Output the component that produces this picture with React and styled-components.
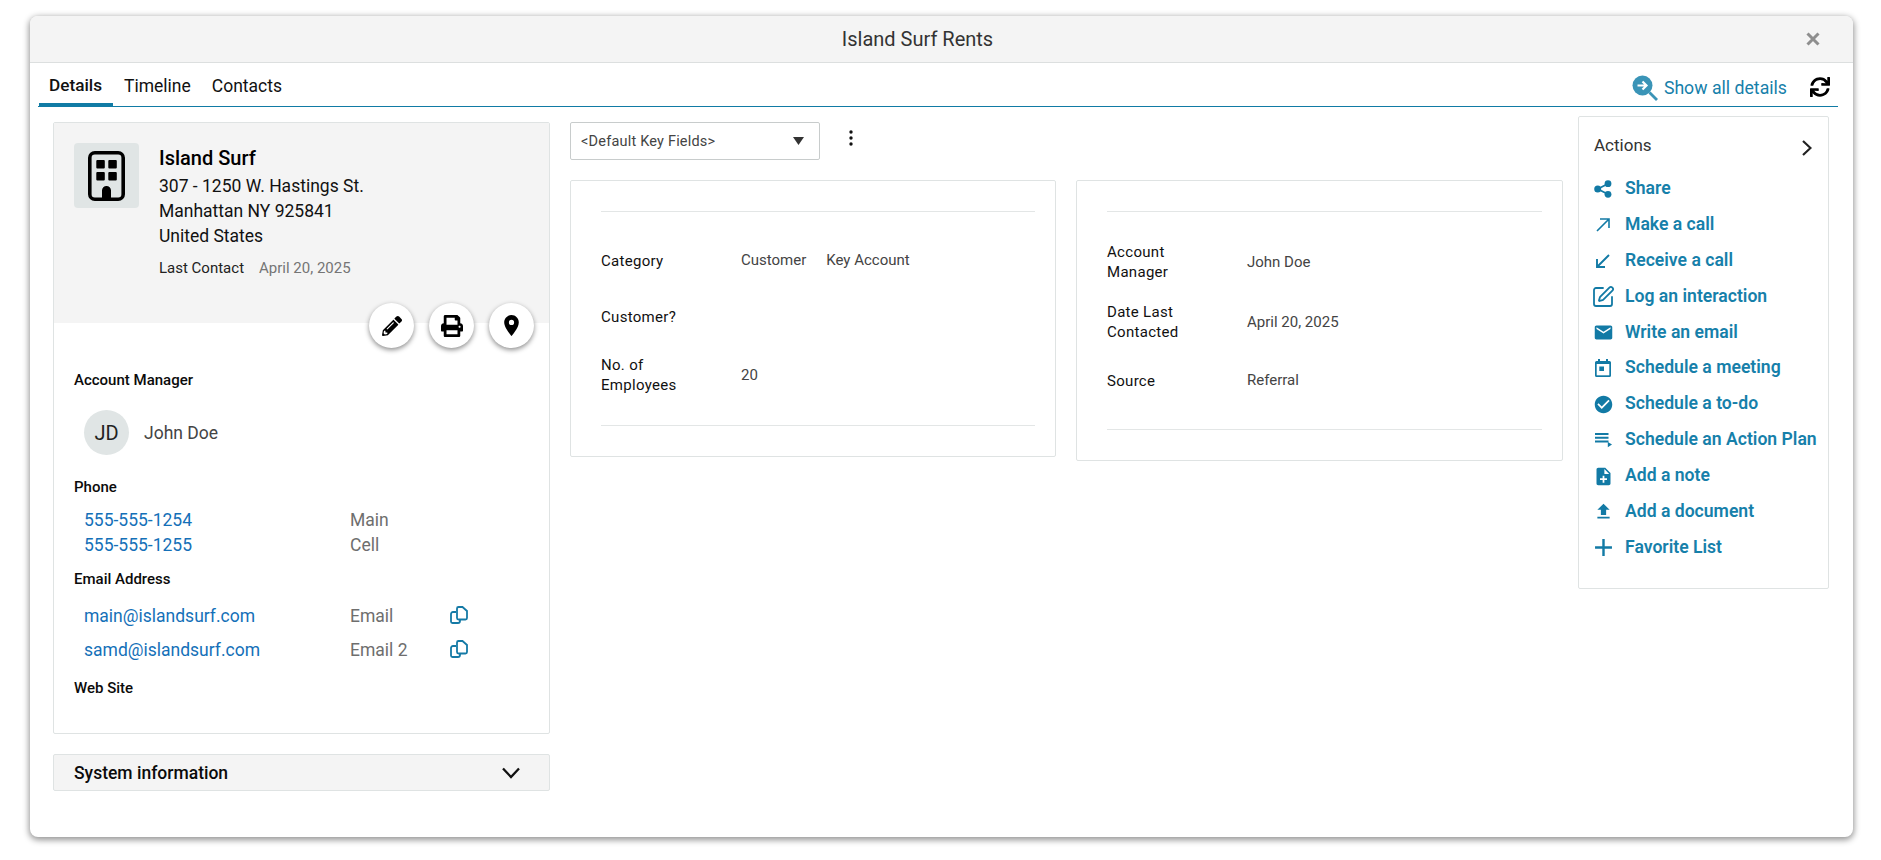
import React from "react";
import styled, { createGlobalStyle } from "styled-components";
import { MdEmail, MdCheckCircle, MdNoteAdd, MdFileUpload, MdAdd, MdLocationOn } from "react-icons/md";
import { FaPencilAlt, FaPrint, FaSync } from "react-icons/fa";
import { SquarePen } from "lucide-react";

const Global = createGlobalStyle`
  html, body { margin: 0; padding: 0; background: #fff; }
  body { font-family: Roboto, "Liberation Sans", sans-serif; color: #111; min-height: 860px; }
  * { box-sizing: border-box; }
`;
const Dialog = styled.div`
  width: 1823px; height: 821px; margin: 16px 0 0 30px;
  background: #fff; border-radius: 8px; overflow: hidden;
  box-shadow: 0 2px 6px 1px rgba(0,0,0,.42);
  display: flex; flex-direction: column;
`;
const Header = styled.div`
  height: 47px; flex: none; background: #f4f4f4; border-bottom: 1px solid #dcdfdf;
  display: flex; align-items: center; justify-content: center; position: relative;
  font-size: 20px; color: #333; padding: 0 48px 0 0;
`;
const Close = styled.svg`
  position: absolute; right: 33px; top: 16px; width: 14px; height: 14px;
`;
const TabBar = styled.div`
  margin: 0 15px 0 8px; height: 44px; flex: none; border-bottom: 1px solid #117ba5;
  display: flex; align-items: flex-end; padding-left: 1px;
`;
const Tab = styled.div`
  height: 43px; padding: 12px 10px 0 11px; font-size: 17.5px; line-height: 22px; color: #111;
`;
const ActiveTab = styled.div`
  height: 44px; width: 74px; padding: 11px 0 0 10px; margin-bottom: -1px; font-size: 17.2px; line-height: 22px;
  font-weight: 500; color: #111; border-bottom: 4px solid #117ba5;
`;
const TabTools = styled.div`
  margin-left: auto; display: flex; align-items: center; height: 43px; padding: 7px 8px 0 0;
  color: #1680aa; font-size: 17.7px; font-weight: 400;
`;
const ShowIcon = styled.svg` width: 26px; height: 26px; margin-right: 6px; margin-left: 1px; `;
const Refresh = styled.span` display: flex; color: #000; font-size: 20px; margin-left: 23px; margin-top: -2px; `;
const Body = styled.div`
  flex: 1; display: flex; padding: 15px 0 0 23px; align-items: flex-start;
`;
const LeftCol = styled.div` width: 497px; flex: none; `;
const Card = styled.div`
  border: 1px solid #dfe3e3; border-radius: 2px; background: #fff; position: relative;
`;
const AccountCard = styled(Card)` height: 612px; `;
const AccountHead = styled.div`
  height: 200px; background: #f4f4f4; padding: 20px; display: flex;
`;
const IconBox = styled.div`
  width: 65px; height: 65px; background: #e0e5e5; border-radius: 4px; display: flex;
  align-items: center; justify-content: center; flex: none; margin-right: 20px;
`;
const AccountInfo = styled.div` padding-top: 3px; `;
const Name = styled.div` font-size: 20px; font-weight: 500; line-height: 25px; color: #000; margin-bottom: 3px; `;
const Addr = styled.div` font-size: 17.5px; line-height: 25px; color: #111; `;
const LastRow = styled.div` font-size: 15px; line-height: 20px; margin-top: 9px; color: #222; display: flex; gap: 15px; `;
const Muted = styled.span` color: #757575; `;
const RoundRow = styled.div`
  position: absolute; top: 180px; right: 15px; display: flex; gap: 15px;
`;
const Round = styled.div`
  width: 45px; height: 45px; border-radius: 50%; background: #fff; display: flex;
  align-items: center; justify-content: center; color: #000; font-size: ${p => p.$s || 20}px;
  box-shadow: 0 2px 5px rgba(0,0,0,.45);
`;
const Contact = styled.div` padding: 47px 20px 0; `;
const Label = styled.div`
  font-size: 15px; font-weight: 500; line-height: 20px; color: #0b0b0b; margin-top: ${p => p.$mt || 0}px;
`;
const Person = styled.div` display: flex; align-items: center; margin: 20px 0 22px 10px; font-size: 17.5px; color: #444; `;
const Avatar = styled.div`
  width: 45px; height: 45px; border-radius: 50%; background: #e0e5e5; color: #222;
  display: flex; align-items: center; justify-content: center; font-size: 20px; margin-right: 15px;
`;
const ContactRow = styled.div`
  display: grid; grid-template-columns: 266px 100px 30px; height: ${p => p.$h}px; padding-left: 10px;
  align-items: center; font-size: 17.5px; margin-top: ${p => p.$mt || 0}px;
`;
const Link = styled.span` color: #1470b8; `;
const Kind = styled.span` color: #6e6e6e; `;
const CopyIcon = styled.svg` width: 18px; height: 18px; margin-top: -3px; `;
const SystemBar = styled.div`
  margin-top: 20px; height: 37px; background: #f4f4f4; border: 1px solid #dfe3e3; border-radius: 2px;
  display: flex; align-items: center; justify-content: space-between; padding: 0 29px 0 20px;
  font-size: 17.5px; font-weight: 500; color: #0b0b0b;
`;
const MidCol = styled.div` width: 993px; flex: none; margin-left: 20px; `;
const SelectRow = styled.div` display: flex; align-items: center; height: 38px; `;
const Select = styled.div`
  width: 250px; height: 38px; border: 1px solid #c8cccc; border-radius: 2px; padding: 0 15px 0 10px;
  display: flex; align-items: center; justify-content: space-between; font-size: 14.5px; color: #444; letter-spacing: .2px;
`;
const Kebab = styled.svg` width: 6px; height: 16px; margin: -6px 0 0 28px; `;
const Panels = styled.div` display: grid; grid-template-columns: 486px 487px; gap: 20px; margin-top: 20px; align-items: start; `;
const Panel = styled(Card)` height: ${p => p.$h}px; padding: 30px 20px 0 30px; `;
const FieldList = styled.div`
  border-top: 1px solid #e3e6e6; border-bottom: 1px solid #e3e6e6; height: ${p => p.$h}px;
  padding-top: ${p => p.$pt}px;
`;
const Field = styled.div`
  display: grid; grid-template-columns: 140px 1fr; align-items: center; height: ${p => p.$h}px;
  font-size: 15px; letter-spacing: .3px; line-height: 20px;
`;
const FLabel = styled.div` color: #111; `;
const FValue = styled.div` color: #444; display: flex; gap: 20px; letter-spacing: 0; margin-top: ${p => p.$up ? -2 : 0}px; `;
const ActionsCol = styled(Card)`
  width: 251px; height: 473px; margin-left: 15px; margin-top: -6px; padding: 17px 0 0 9px;
`;
const ActionsHead = styled.div`
  display: flex; justify-content: space-between; font-size: 17px; line-height: 22px; color: #333;
  padding: 0 16px 0 6px; margin-bottom: 11px; height: 25px; align-items: flex-start;
`;
const ChevronRightIcon = styled.svg` width: 10px; height: 16px; margin-top: 6px; `;
const ActionRow = styled.div`
  height: 35.9px; display: flex; align-items: center; color: #1680aa; font-size: 17.6px; font-weight: 600; white-space: nowrap;
`;
const ActionIcon = styled.span`
  width: 30px; margin-right: 7px; display: flex; justify-content: center; flex: none; margin-top: 2px; color: #127aa5;
  font-size: ${p => p.$s || 21}px;
`;

const ShareGlyph = () => (
  <svg width="18" height="18" viewBox="0 0 18 18" fill="#127aa5">
    <circle cx="3.700" cy="9" r="3.500" /><circle cx="14" cy="3.700" r="3.400" /><circle cx="14" cy="14.300" r="3.400" />
    <path d="M3.700 9 14 3.700M3.700 9 14 14.300" stroke="#127aa5" strokeWidth="1.800" />
  </svg>
);
const ArrowOut = () => (
  <svg width="16" height="16" viewBox="0 0 16 16" fill="none" stroke="#127aa5" strokeWidth="1.600"><path d="M2 14 14 2M5 2h9v9" /></svg>
);
const ArrowIn = () => (
  <svg width="16" height="16" viewBox="0 0 16 16" fill="none" stroke="#127aa5" strokeWidth="1.900"><path d="M14 2 2 14M2 6v8h8" /></svg>
);
const CalendarGlyph = () => (
  <svg width="16" height="18" viewBox="0 0 16 18">
    <path fill="#127aa5" d="M3 0h2v2h6V0h2v2h1.500A1.500 1.500 0 0 1 16 3.500v13a1.500 1.500 0 0 1-1.500 1.500h-13A1.500 1.500 0 0 1 0 16.500v-13A1.500 1.500 0 0 1 1.500 2H3z" />
    <rect x="1.700" y="5" width="12.600" height="11.300" fill="#fff" />
    <rect x="4.300" y="7.500" width="4.700" height="4.500" fill="#127aa5" />
  </svg>
);
const PlanGlyph = () => (
  <svg width="18" height="15" viewBox="0 0 18 15" fill="#127aa5">
    <path d="M1 0h13.500v2H1zM1 3.700h13.500v2H1zM1 7.400h13.500v2H1z" />
    <path d="M13.800 9 18 11.500l-4.200 2.800z" />
  </svg>
);

const actions = [
  ["Share", <ShareGlyph />],
  ["Make a call", <ArrowOut />],
  ["Receive a call", <ArrowIn />],
  ["Log an interaction", <SquarePen size={24} strokeWidth={1.8} />],
  ["Write an email", <MdEmail />, 21],
  ["Schedule a meeting", <CalendarGlyph />],
  ["Schedule a to-do", <MdCheckCircle />, 21],
  ["Schedule an Action Plan", <PlanGlyph />],
  ["Add a note", <MdNoteAdd />, 21],
  ["Add a document", <MdFileUpload />, 21],
  ["Favorite List", <MdAdd />, 29],
];
const Copy = () => (
  <CopyIcon viewBox="0 0 18 18" fill="none" stroke="#157aa6" strokeWidth="1.800">
    <path d="M6 6H3a2 2 0 0 0-2 2v7.500a1.500 1.500 0 0 0 1.500 1.500H8a2 2 0 0 0 2-2v-1" />
    <path d="M7 2.500A1.500 1.500 0 0 1 8.500 1h4L17 5v7a1.500 1.500 0 0 1-1.500 1.500h-7A1.500 1.500 0 0 1 7 12z" />
  </CopyIcon>
);

export default function App() {
  return (
    <>
      <Global />
      <Dialog>
        <Header>
          Island Surf Rents
          <Close viewBox="0 0 14 14" stroke="#8e8e8e" strokeWidth="3" fill="none"><path d="M1.500 1.500l11 11M12.500 1.500l-11 11" /></Close>
        </Header>
        <TabBar>
          <ActiveTab>Details</ActiveTab>
          <Tab>Timeline</Tab>
          <Tab>Contacts</Tab>
          <TabTools>
            <ShowIcon viewBox="0 0 26 26">
              <circle cx="10.500" cy="10.500" r="10" fill="#3a94b7" />
              <path d="M17.500 17.500l7.500 7.500" stroke="#3a94b7" strokeWidth="2.800" />
              <path d="M5.500 10.500h9.500M10.500 6.500l4 4-4 4" stroke="#fff" strokeWidth="2.200" fill="none" />
            </ShowIcon>
            Show all details
            <Refresh><FaSync /></Refresh>
          </TabTools>
        </TabBar>
        <Body>
          <LeftCol>
            <AccountCard>
              <AccountHead>
                <IconBox>
                  <svg width="37" height="50" viewBox="0 0 37 50" fill="none">
                    <rect x="1.800" y="1.800" width="33.400" height="46.400" rx="5" stroke="#000" strokeWidth="3.600" />
                    <path fill="#000" d="M9.300 9h6.500a1 1 0 0 1 1 1v6.500a1 1 0 0 1-1 1H9.300a1 1 0 0 1-1-1V10a1 1 0 0 1 1-1zM21.300 9h6.500a1 1 0 0 1 1 1v6.500a1 1 0 0 1-1 1h-6.500a1 1 0 0 1-1-1V10a1 1 0 0 1 1-1zM9.300 21h6.500a1 1 0 0 1 1 1v6.500a1 1 0 0 1-1 1H9.300a1 1 0 0 1-1-1V22a1 1 0 0 1 1-1zM21.300 21h6.500a1 1 0 0 1 1 1v6.500a1 1 0 0 1-1 1h-6.500a1 1 0 0 1-1-1V22a1 1 0 0 1 1-1zM14 48V39.500a4.500 4.500 0 0 1 9 0V48z" />
                  </svg>
                </IconBox>
                <AccountInfo>
                  <Name>Island Surf</Name>
                  <Addr>307 - 1250 W. Hastings St.</Addr>
                  <Addr>Manhattan NY 925841</Addr>
                  <Addr>United States</Addr>
                  <LastRow>Last Contact <Muted>April 20, 2025</Muted></LastRow>
                </AccountInfo>
              </AccountHead>
              <RoundRow>
                <Round><FaPencilAlt /></Round>
                <Round $s={22}><FaPrint /></Round>
                <Round $s={25}><MdLocationOn /></Round>
              </RoundRow>
              <Contact>
                <Label>Account Manager</Label>
                <Person><Avatar>JD</Avatar>John Doe</Person>
                <Label>Phone</Label>
                <ContactRow $h={25} $mt={10}><Link>555-555-1254</Link><Kind>Main</Kind></ContactRow>
                <ContactRow $h={25}><Link>555-555-1255</Link><Kind>Cell</Kind></ContactRow>
                <Label $mt={12}>Email Address</Label>
                <ContactRow $h={34} $mt={10}><Link>main@islandsurf.com</Link><Kind>Email</Kind><Copy /></ContactRow>
                <ContactRow $h={34}><Link>samd@islandsurf.com</Link><Kind>Email 2</Kind><Copy /></ContactRow>
                <Label $mt={11}>Web Site</Label>
              </Contact>
            </AccountCard>
            <SystemBar>
              System information
              <svg width="18" height="12" viewBox="0 0 18 12" fill="none" stroke="#111" strokeWidth="2.300"><path d="M1 1.500 9 10l8-8.500" /></svg>
            </SystemBar>
          </LeftCol>
          <MidCol>
            <SelectRow>
              <Select>&lt;Default Key Fields&gt;
                <svg width="11" height="8" viewBox="0 0 11 8" fill="#333"><path d="M0 0h11L5.500 8z" /></svg>
              </Select>
              <Kebab viewBox="0 0 6 16" fill="#111"><circle cx="3" cy="2" r="1.700" /><circle cx="3" cy="8" r="1.700" /><circle cx="3" cy="14" r="1.700" /></Kebab>
            </SelectRow>
            <Panels>
              <Panel $h={277}>
                <FieldList $h={215} $pt={21}>
                  <Field $h={56}><FLabel>Category</FLabel><FValue $up><span>Customer</span><span>Key Account</span></FValue></Field>
                  <Field $h={56}><FLabel>Customer?</FLabel></Field>
                  <Field $h={60}><FLabel>No. of<br />Employees</FLabel><FValue>20</FValue></Field>
                </FieldList>
              </Panel>
              <Panel $h={281}>
                <FieldList $h={219} $pt={20}>
                  <Field $h={60}><FLabel>Account<br />Manager</FLabel><FValue>John Doe</FValue></Field>
                  <Field $h={60}><FLabel>Date Last<br />Contacted</FLabel><FValue>April 20, 2025</FValue></Field>
                  <Field $h={58}><FLabel>Source</FLabel><FValue $up>Referral</FValue></Field>
                </FieldList>
              </Panel>
            </Panels>
          </MidCol>
          <ActionsCol>
            <ActionsHead>
              Actions
              <ChevronRightIcon viewBox="0 0 10 16" fill="none" stroke="#222" strokeWidth="2.200"><path d="M1 1l7.500 7L1 15" /></ChevronRightIcon>
            </ActionsHead>
            {actions.map(([t, i, s]) => <ActionRow key={t}><ActionIcon $s={s}>{i}</ActionIcon>{t}</ActionRow>)}
          </ActionsCol>
        </Body>
      </Dialog>
    </>
  );
}
